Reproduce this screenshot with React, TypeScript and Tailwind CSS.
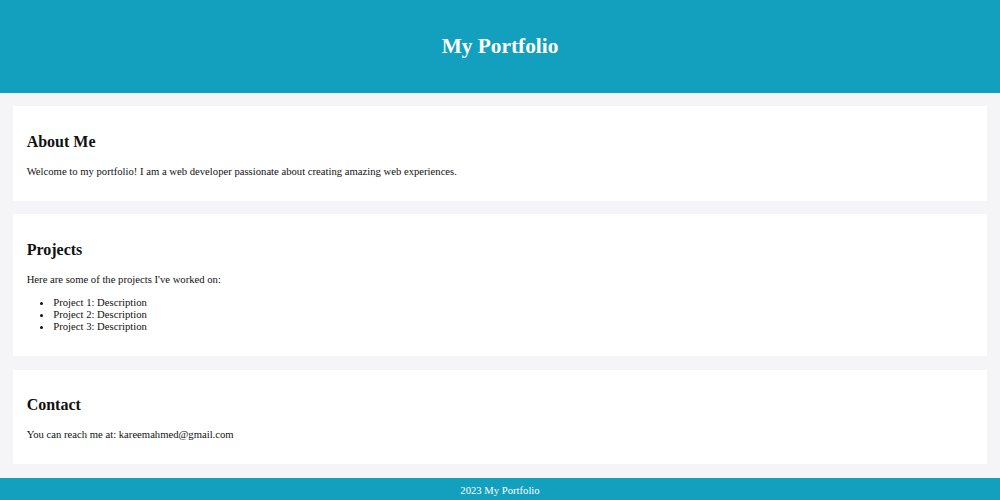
export default function App() {
  return (
    <div className="bg-[#f5f4f7] text-[#111] font-['Liberation_Serif','Times_New_Roman',serif] leading-[1.15] text-[10.67px]">
      <header className="bg-[#139fbe] py-[20px] text-center text-white">
        <h1 className="m-0 py-[14.3px] text-[21.33px] font-bold leading-[1.15]">My Portfolio</h1>
      </header>
      <main className="flex flex-col gap-[13.33px] p-[13.33px]">
        <section className="bg-white p-[13.33px]">
          <h2 className="my-[13.33px] text-[16px] font-bold leading-[1.15]">About Me</h2>
          <p className="my-[10.67px]">
            Welcome to my portfolio! I am a web developer passionate about creating amazing web experiences.
          </p>
        </section>
        <section className="bg-white p-[13.33px]">
          <h2 className="my-[13.33px] text-[16px] font-bold leading-[1.15]">Projects</h2>
          <p className="my-[10.67px]">Here are some of the projects I've worked on:</p>
          <ul className="my-[10.67px] list-disc pl-[26.67px]">
            <li>Project 1: Description</li>
            <li>Project 2: Description</li>
            <li>Project 3: Description</li>
          </ul>
        </section>
        <section className="bg-white p-[13.33px]">
          <h2 className="my-[13.33px] text-[16px] font-bold leading-[1.15]">Contact</h2>
          <p className="my-[10.67px]">You can reach me at: kareemahmed@gmail.com</p>
        </section>
      </main>
      <footer className="bg-[#139fbe] py-[6.67px] text-center text-white">
        <p>2023 My Portfolio</p>
      </footer>
    </div>
  );
}
